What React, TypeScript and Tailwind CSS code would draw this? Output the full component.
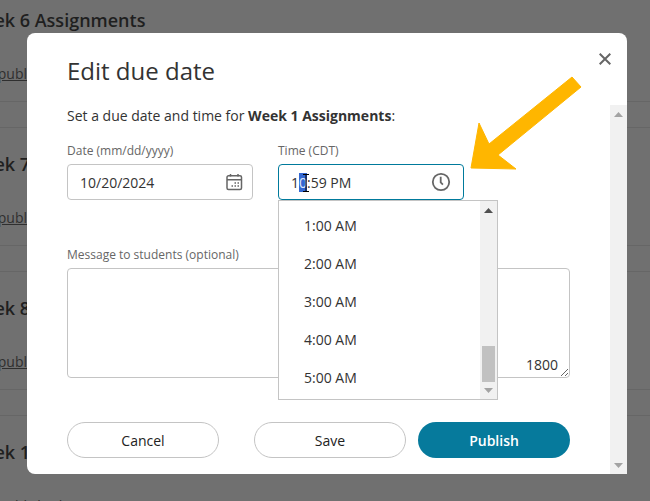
import React from "react";

const font = { fontFamily: '"Open Sans", sans-serif' };

const weeks = ["Week 6 Assignments", "Week 7 Assignments", "Week 8 Assignments", "Week 10 Assignments"];
const times = ["1:00 AM", "2:00 AM", "3:00 AM", "4:00 AM", "5:00 AM"];

const UpArrow = () => (
  <svg width="9" height="5" viewBox="0 0 9 5" className="block">
    <polygon points="4.5,0 9,5 0,5" fill="currentColor" />
  </svg>
);

const DownArrow = () => (
  <svg width="9" height="5" viewBox="0 0 9 5" className="block">
    <polygon points="0,0 9,0 4.500,5" fill="currentColor" />
  </svg>
);

const App: React.FC = () => {
  return (
    <div className="relative w-[650px] h-[501px] overflow-hidden bg-[#707070] text-[#333333]" style={font}>
      {/* page behind the overlay */}
      <div className="-mt-[17px] w-[650px]">
        {weeks.map((week) => (
          <div key={week} className="h-[144px] border-t border-[#666666] pt-[22px]">
            <div className="h-[96px] border-b border-[#666666]">
              <div className="-ml-[33px] text-[18px] leading-[28px] font-semibold text-[#1f1f1f] whitespace-nowrap">{week}</div>
              <div className="mt-[30px] -ml-[21px] text-[14px] leading-[20px] underline text-[#2f2f2f]">Unpublished</div>
            </div>
          </div>
        ))}
      </div>

      {/* dialog */}
      <div className="absolute left-[27px] top-[33px] w-[600px] h-[441px] bg-white rounded-t-lg rounded-bl-lg flex">
        <div className="relative flex-1 pl-[40px] pr-[40px] pt-[21px]">
          <h2 className="text-[24px] leading-[34px] text-[#333333]">Edit due date</h2>
          <p className="mt-[18px] text-[14px] leading-[20px]">
            Set a due date and time for <span className="font-bold">Week 1 Assignments</span>:
          </p>

          <div className="mt-[17px] flex gap-[25px]">
            <div className="w-[186px]">
              <div className="text-[12px] leading-[16px] text-[#666666]">Date (mm/dd/yyyy)</div>
              <div className="mt-[5px] h-[36px] border border-[#c4c4c4] rounded flex items-center justify-between pl-[12px] pr-[9px] text-[14px]">
                <span>10/20/2024</span>
                <svg width="18" height="18" viewBox="0 0 18 18" fill="none" stroke="#666666" strokeWidth="1.5">
                  <rect x="2" y="2.8" width="14.5" height="13.7" rx="1.5" />
                  <path d="M2 6.8h14.5M5.5 1v2.5M13 1v2.5" />
                  <path d="M9.5 10h1.5M12.5 10h1.5M6.5 13h1.5M9.5 13h1.5M12.5 13h1.5" strokeWidth="1.6" />
                </svg>
              </div>
            </div>
            <div className="w-[186px]">
              <div className="text-[12px] leading-[16px] text-[#666666]">Time (CDT)</div>
              <div className="relative mt-[5px] h-[36px] border border-[#007a9c] rounded flex items-center justify-between pl-[12px] pr-[12px] text-[14px]">
                <span>
                  1<span className="bg-[#3367d1] text-[#dfe8fa]">0</span>:59 PM
                </span>
                <svg width="20" height="20" viewBox="0 0 20 20" fill="none" stroke="#666666" strokeWidth="1.8">
                  <circle cx="10" cy="10" r="8.2" />
                  <path d="M9.7 4.8v5.600l2.200 2.200" />
                </svg>
                {/* text cursor */}
                <svg width="8" height="18" viewBox="0 0 8 18" className="absolute left-[23px] top-[9px]" fill="none" stroke="#000000" strokeWidth="1">
                  <path d="M1 .5h6M4 .5v17M1 17.500h6" />
                </svg>
              </div>
            </div>
          </div>

          <div className="mt-[47px] text-[12px] leading-[16px] text-[#666666]">Message to students (optional)</div>
          <div className="relative mt-[5px] h-[110px] w-[503px]">
            <textarea className="block w-full h-full border border-[#c4c4c4] rounded outline-none" />
            <span className="absolute right-[12px] bottom-[3px] text-[14px] leading-[20px]">1800</span>
          </div>

          <div className="mt-[44px] w-[503px] flex items-center text-[14px]">
            <button className="w-[152px] h-[36px] rounded-full border border-[#c4c4c4] bg-white font-medium text-[#222222]">Cancel</button>
            <button className="ml-[35px] w-[152px] h-[36px] rounded-full border border-[#c4c4c4] bg-white font-medium text-[#222222]">Save</button>
            <button className="ml-[12px] w-[152px] h-[36px] rounded-full bg-[#067a9c] text-white font-semibold">Publish</button>
          </div>

          {/* time options dropdown */}
          <div className="absolute left-[251px] top-[167px] w-[220px] h-[200px] bg-white border border-[#c4c4c4] flex">
            <div className="flex-1 pt-[5px] pl-[25px] text-[14px]">
              {times.map((time) => (
                <div key={time} className="h-[38px] flex items-center">{time}</div>
              ))}
            </div>
            <div className="w-[17px] bg-[#f1f1f1] flex flex-col items-center justify-between pt-[7px] pb-[6px]">
              <span className="text-[#505050]"><UpArrow /></span>
              <span className="mt-auto mb-[6px] w-[13px] h-[36px] bg-[#c1c1c1]" />
              <span className="text-[#a3a3a3]"><DownArrow /></span>
            </div>
          </div>

          {/* close */}
          <button className="absolute right-[-1px] top-[20px]">
            <svg width="12" height="12" viewBox="0 0 12 12" className="block" fill="none" stroke="#666666" strokeWidth="2">
              <path d="M.7.7l10.600 10.600M11.300.7L.7 11.300" />
            </svg>
          </button>
        </div>

        {/* dialog scrollbar */}
        <div className="mt-[72px] w-[17px] bg-[#f1f1f1] flex flex-col items-center justify-between pt-[7px] pb-[6px] text-[#a3a3a3]">
          <UpArrow />
          <DownArrow />
        </div>
      </div>

      {/* annotation arrow */}
      <svg width="650" height="501" viewBox="0 0 650 501" className="absolute left-0 top-0 pointer-events-none">
        <polygon
          points="572,77 581,87 498,155 516,169 471,168 479,123 489,144"
          fill="#ffb600"
          stroke="#ffb600"
          strokeWidth="1"
          strokeLinejoin="round"
        />
      </svg>
    </div>
  );
};

export default App;
